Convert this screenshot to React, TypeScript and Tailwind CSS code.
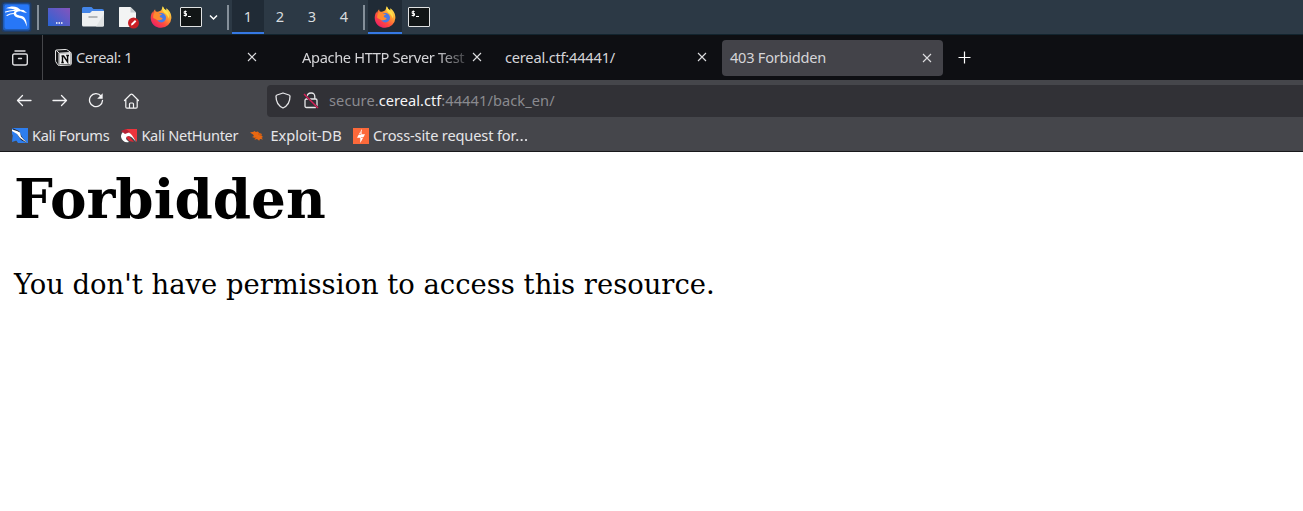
import type { ReactNode } from "react";

function Firefox({ id }: { id: string }) {
  return (
    <svg width="22" height="22" viewBox="0 0 22 22" className="block shrink-0">
      <defs>
        <linearGradient id={`${id}-body`} x1="0.85" y1="0.1" x2="0.2" y2="0.9">
          <stop offset="0" stopColor="#ffe850" />
          <stop offset="0.35" stopColor="#ff9a32" />
          <stop offset="0.68" stopColor="#ff4b3e" />
          <stop offset="1" stopColor="#ee2462" />
        </linearGradient>
      </defs>
      <path d="M11.3 4.2 12.9.3c.4 2 1.8 3 3.2 4.1.3-.6.3-1.4.1-2.1 3.1 2 5.3 5.6 5.2 9.7A10.4 10.4 0 0 1 11 21.8C5.200 21.800.7 17.300.7 11.700c0-2.400.9-4.800 1.900-6.300 0 .8.100 1.300.3 1.800C3.300 5.700 4 4.300 5.100 3.300c0 1.200.5 2 1.100 2.500 1.600-.3 3.200-.4 5.100-1.600Z" fill={`url(#${id}-body)`} />
      <circle cx="11.300" cy="11.700" r="4.700" fill="#4779e8" />
      <path d="M6.300 13.500c1.700 1.500 3.400.6 4.800.2.900-.3 1.600-.900 1.500-1.300-.2-.7-1.500-.5-2.500-1.300-.5-.5-.4-1.200.2-1.700.8-.6 1.600-.6 1.700-1.300-1-.5-2.200-.4-3-.7-.8-.8-.9-1.500-2.800-1.600-1.600.4-3.300 2.900-2.900 6.100Z" fill="#ff8b30" />
      <path d="M12.900.3c.4 2 1.800 3 3.200 4.100 2.400 2.100 3.600 4.700 2.600 8-.6-2.200-1.800-3.800-3.600-5.200-1.700-1.300-3.600-3.300-2.200-6.900Z" fill="#ffe04b" />
    </svg>
  );
}

function Terminal() {
  return (
    <span className="flex h-5 w-[22px] shrink-0 rounded-[1px] border border-[#e0e2e3] bg-[#111516]">
      <svg width="20" height="18" viewBox="0 0 20 18" fill="none" stroke="#fff">
        <path d="M5.600 3.500H3.200v2h2.300v2H2.700M4.300 2.500v6M7 8.500h3" strokeWidth="1" />
      </svg>
    </span>
  );
}

function KaliLogo() {
  return (
    <svg width="32" height="34" viewBox="0 0 32 34" className="block">
      <rect x="1.500" y="2" width="30" height="30" rx="3" fill="#1f3d68" />
      <rect x="3" y="3.500" width="27" height="27" rx="2" fill="#205cb5" />
      <rect x="4.500" y="4.500" width="24.500" height="24.500" rx="2" fill="#2777f7" />
      <path d="M6 8.200c4-1.900 8-2.200 11.500-.7l3 2.200 3 .3 3.500 3-3.800-.8-2.500-.9c-3.400-.1-5.200.9-4.400 2.600 1.600 2.200 7 .8 8.700 4.500 1.700 2.400 1.600 5.400 2 8.400-1.600-3.400-2.100-6.500-5.500-8.300-4.200-1-7.200-1.400-7.900-4.700-.1-1.600 1-3 2-3.600-3-1.500-6-1.900-9.600-2Z" fill="#fff" />
      <path d="M5.500 12c3.500-1.400 6.500-1.700 9.500-1.500M7 15.500c2.200-1.400 4-2 6.500-2" fill="none" stroke="#fff" strokeWidth="1.100" strokeLinecap="round" />
    </svg>
  );
}

function Separator({ className }: { className: string }) {
  return <span className={`h-[25px] w-[2px] shrink-0 bg-[#85909a] ${className}`} />;
}

function Workspace({ n }: { n: number }) {
  return (
    <span className={`flex h-full w-8 shrink-0 items-center justify-center border-b-2 pt-px font-['Noto_Sans',sans-serif] text-[14.600px] text-[#d8dcdf] ${n === 1 ? "border-[#3678e4] bg-[#202b36]" : "border-transparent"}`}>
      {n}
    </span>
  );
}

function DesktopPanel() {
  return (
    <div className="flex h-[34px] items-center bg-[#2c3945]">
      <KaliLogo />
      <Separator className="ml-[5px]" />
      <svg width="22" height="18" viewBox="0 0 22 18" className="ml-[9px] shrink-0">
        <defs>
          <linearGradient id="desktop" x1="0" x2="1" y1="1" y2="0">
            <stop stopColor="#2864d5" />
            <stop offset="1" stopColor="#8554bc" />
          </linearGradient>
        </defs>
        <rect width="22" height="18" fill="url(#desktop)" />
        <path d="M8 15h1.500m1 0H12m1 0h1.500" stroke="#fff" strokeWidth="1.300" />
      </svg>
      <svg width="22" height="20" viewBox="0 0 22 20" className="ml-3 shrink-0">
        <path d="M0 1.500Q0 0 1.500 0h8l2 2H20q2 0 2 2v3H0Z" fill="#4385e8" />
        <path d="M0 6h8l2-2h12v14q0 1.500-1.500 1.500h-19Q0 19.500 0 18Z" fill="#eef0f1" />
        <path d="m22 7-8 12.500h6.500Q22 19.500 22 18Z" fill="#e0e3e4" />
        <path d="M6.500 10h9" stroke="#8d9294" strokeWidth="1.200" />
      </svg>
      <svg width="22" height="23" viewBox="0 0 22 23" className="ml-[14px] shrink-0">
        <path d="M1.500 1h11L18 6.500V21H1.500Q1 21 1 20.500v-19Q1 1 1.500 1Z" fill="#f3f4f4" />
        <path d="m12.500 1 5.500 5.500h-5.500Z" fill="#c8cccf" />
        <circle cx="15.500" cy="17" r="5.500" fill="#c91e24" />
        <path d="m13 19.500.5-2 3.500-3.400 1.300 1.300-3.500 3.500Z" fill="#fff" />
      </svg>
      <span className="ml-[10px] flex"><Firefox id="launcher" /></span>
      <span className="ml-2 flex"><Terminal /></span>
      <svg width="9" height="7" viewBox="0 0 9 7" className="ml-[7px] shrink-0" fill="none" stroke="#fff" strokeWidth="1.500">
        <path d="m1 1.500 3.500 3.500L8 1.500" />
      </svg>
      <Separator className="mr-[3px] ml-[9px]" />
      {[1, 2, 3, 4].map((n) => <Workspace key={n} n={n} />)}
      <Separator className="mr-[3px] ml-[3px]" />
      <span className="flex h-full w-[34px] shrink-0 items-center justify-center border-b-2 border-[#3678e4] bg-[#202b36]">
        <span className="relative top-px flex"><Firefox id="task" /></span>
      </span>
      <span className="ml-[6px] flex"><Terminal /></span>
    </div>
  );
}

function Close() {
  return (
    <svg width="10" height="10" viewBox="0 0 10 10" className="shrink-0" fill="none" stroke="#dddde0" strokeWidth="1.100">
      <path d="m1 1 8 8M9 1 1 9" />
    </svg>
  );
}

function TabStrip() {
  return (
    <div className="flex h-[46px] items-center border-t border-[#12242e] bg-[#0e0f13] text-[14.600px] text-[#d5d5d8]">
      <div className="flex h-full w-[43px] shrink-0 items-center border-r border-[#45464a] pl-3">
        <svg width="16" height="16" viewBox="0 0 16 16" fill="none" stroke="#dedee1" strokeWidth="1.400" strokeLinecap="round">
          <path d="M3 1h10M2.200 4h11.600q1.500 0 1.500 1.500V13q0 2-2 2H2.700q-2 0-2-2V5.500Q.7 4 2.200 4ZM6.500 8.500h3" />
        </svg>
      </div>
      <div className="flex w-[214px] shrink-0 items-center pl-3">
        <svg width="17" height="17" viewBox="0 0 17 17" className="shrink-0">
          <path d="m1.500 1 10-.6 4 2.800q.8.500.8 1.500v10.200q0 1-1.200 1.100l-10.800.6q-1 0-1.500-.8L.8 12.700Q.5 12.300.5 11.500V2q0-1 1-1Z" fill="#17181a" stroke="#e5e5e5" />
          <path d="m1.300 1.500 3 2.700 11.500-.7M4 4.200v12" fill="none" stroke="#e5e5e5" />
          <path d="M4.500 4.500 15.700 4v10.900l-11.200.7Z" fill="#eee" />
          <path d="M6.500 7h2.100l4 5.900V6.500M7.500 7v6.500M6.300 13.500h2.500M11.200 6.500H14" fill="none" stroke="#090909" strokeWidth="1.400" />
        </svg>
        <span className="ml-1 tracking-[-0.350px]">Cereal: 1</span>
        <span className="ml-auto flex"><Close /></span>
      </div>
      <div className="flex w-[225px] shrink-0 items-center pl-[45px]">
        <span className="w-[163px] overflow-hidden whitespace-nowrap tracking-[-0.330px] [mask-image:linear-gradient(to_right,black_82%,transparent_106%)]">Apache HTTP Server Test</span>
        <span className="ml-auto flex"><Close /></span>
      </div>
      <div className="flex w-[225px] shrink-0 items-center pl-[23px]">
        <span className="tracking-[-0.200px]">cereal.ctf:44441/</span>
        <span className="ml-auto flex"><Close /></span>
      </div>
      <div className="ml-[15px] flex h-9 w-[221px] shrink-0 items-center rounded bg-[#434349] pr-[11px] pl-2">
        <span className="tracking-[-0.250px]">403 Forbidden</span>
        <span className="ml-auto flex"><Close /></span>
      </div>
      <svg width="13" height="13" viewBox="0 0 13 13" className="ml-[15px] shrink-0" fill="none" stroke="#fff" strokeWidth="1.200">
        <path d="M6.500.5v12M.5 6.500h12" />
      </svg>
    </div>
  );
}

function NavigationBar() {
  return (
    <div className="flex h-[41px] items-center bg-[#45464b] pl-4">
      <svg width="16" height="16" viewBox="0 0 16 16" fill="none" stroke="#f4f4f5" strokeWidth="1.300" strokeLinecap="round" strokeLinejoin="round">
        <path d="M15 7.500H1.500M6.500 2.500l-5 5 5 5" />
      </svg>
      <svg width="16" height="16" viewBox="0 0 16 16" className="ml-5" fill="none" stroke="#f4f4f5" strokeWidth="1.300" strokeLinecap="round" strokeLinejoin="round">
        <path d="M1 7.500h13.500M9.500 2.500l5 5-5 5" />
      </svg>
      <svg width="16" height="16" viewBox="0 0 16 16" className="ml-5" fill="none" stroke="#f4f4f5" strokeWidth="1.300">
        <path d="M13 3A6.500 6.500 0 1 0 14.500 7.500" strokeLinecap="round" />
        <path d="M14.700.3v5.500H9.200Z" fill="#f4f4f5" stroke="none" />
      </svg>
      <svg width="16" height="16" viewBox="0 0 16 16" className="ml-[19px]" fill="none" stroke="#f4f4f5" strokeWidth="1.200" strokeLinecap="round" strokeLinejoin="round">
        <path d="m1.500 7.500 6-6q1-.8 2 0l6 6M2.800 6.800V14q0 1.200 1.200 1.200h9q1.200 0 1.200-1.200V6.800M6.500 15v-4q0-1 1-1h2q1 0 1 1v4" />
      </svg>
      <div className="ml-32 flex h-8 flex-1 items-center rounded-l bg-[#313136] pl-2 text-[14.600px]">
        <svg width="16" height="17" viewBox="0 0 16 17" fill="none" stroke="#e6e6e8" strokeWidth="1.300" strokeLinejoin="round">
          <path d="M8 1 14 3q1 .4 1 1.300C15 10 12.500 14 8 16 3.500 14 1 10 1 4.300Q1 3.400 2 3Z" />
        </svg>
        <svg width="16" height="17" viewBox="0 0 16 17" className="ml-3" fill="none" stroke="#e6e6e8" strokeWidth="1.300">
          <path d="M4.200 7V4.800q0-3.600 3.800-3.800t3.800 3.800V7M3.500 7h9q1.500 0 1.500 1.500V14q0 1.500-1.500 1.500h-9Q2 15.500 2 14V8.500Q2 7 3.500 7Z" />
          <path d="m1 2 14 14" stroke="#313136" strokeWidth="2.200" />
          <path d="m1 2 14 14" stroke="#d91f58" strokeWidth="1.400" />
        </svg>
        <span className="ml-[10px] whitespace-nowrap tracking-[0.080px] text-[#8a8a8f]">secure.<span className="tracking-[0.020px] text-[#f5f5f6]">cereal.ctf</span>:44441/back_en/</span>
      </div>
    </div>
  );
}

function Bookmark({ icon, label, className }: { icon: ReactNode; label: ReactNode; className: string }) {
  return (
    <div className={`flex shrink-0 items-center gap-1 whitespace-nowrap ${className}`}>
      <svg width="16" height="16" viewBox="0 0 16 16" className="shrink-0">{icon}</svg>
      <span>{label}</span>
    </div>
  );
}

function Bookmarks() {
  return (
    <div className="flex h-[31px] items-center border-b border-[#18181b] bg-[#45464b] pl-3 text-[14.600px] text-[#e5e5e8]">
      <Bookmark className="w-[109.400px] tracking-[-0.300px]" label="Kali Forums" icon={<>
        <path d="M0 0h16v15H6L0 6Z" fill="#2e7eee" />
        <path d="M0 0 7 3l3 6 5 6-6-3-4-6Z" fill="#202126" />
        <path d="m0 14 1-9 5 7Z" fill="#2e7eee" />
        <path d="M0 1.500 5 3l3 1.500 1 4 6 6.500-7-5-3-4-5-3Z" fill="#fff" />
      </>} />
      <Bookmark className="w-[129px] tracking-[-0.340px]" label="Kali NetHunter" icon={<>
        <path d="M4 1h12v13L9 6Z" fill="#ee343c" />
        <path d="M0 9c0-8 9-9 15 5-5-7-9-7-10-3l3 3C4 15 1 13 0 9Z" fill="#fff" />
        <path d="m0 3 5-2 4 3-5 2Z" fill="#b62435" />
        <path d="m5 9 3-1 5 6-5-1Z" fill="#dd2935" />
      </>} />
      <Bookmark className="w-[102.600px] tracking-[0px]" label="Exploit-DB" icon={<>
        <path d="m0 4.500 3.500-.8L4.500 3l1.300 1 2-.5 1.500 1.500L12 6l-.8 1.200L13 9l-1.500.8 1.500 1.700-3-.4-.8 1.600-2.200-1.600-2.500.6.7-1.800L2 9l2-1-1-1.500Z" fill="#e96812" />
        <path d="M9 5v2m2-1-1 2M6 9l-1 2" stroke="#b9520f" strokeWidth=".7" />
      </>} />
      <Bookmark className="tracking-[-0.150px]" label={<>Cross-site request for<span className="-ml-px inline-block origin-left scale-x-[1.150]">…</span></>} icon={<>
        <path d="M0 0h16v16H0Z" fill="#fc693a" />
        <path d="M8.800 1v5.300H12L7.300 15V9.800H4Z" fill="#fff" />
        <path d="M8 3v3.500H5.500m2.500 3h3" stroke="#fc693a" strokeWidth=".6" fill="none" />
      </>} />
    </div>
  );
}

export default function App() {
  return (
    <div className="flex h-[511px] flex-col overflow-hidden bg-white font-['Noto_Sans',sans-serif]">
      <DesktopPanel />
      <TabStrip />
      <NavigationBar />
      <Bookmarks />
      <main className="flex-1 pt-[15px] pl-[14px] font-['DejaVu_Serif',serif] text-black">
        <h1 className="text-[54.800px] leading-[64px] font-bold">Forbidden</h1>
        <p className="mt-[38px] text-[27.420px] leading-8">You don't have permission to access this resource.</p>
      </main>
    </div>
  );
}
